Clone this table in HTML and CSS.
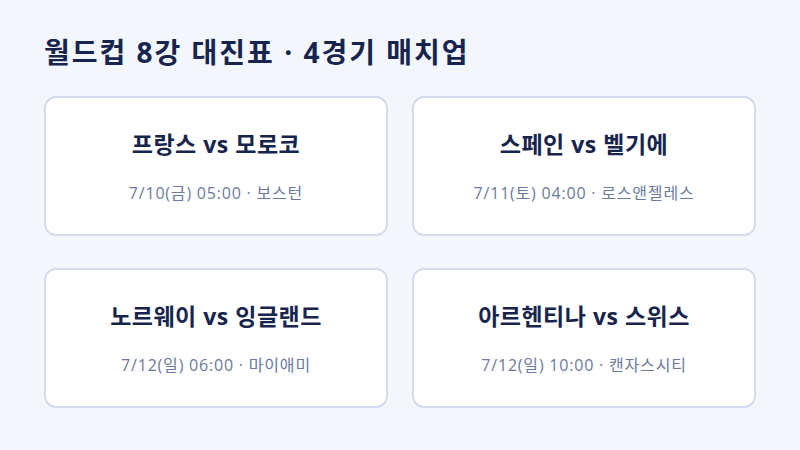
FILE: index.html
```html
<!DOCTYPE html>
<html lang="ko">
<head>
  <meta charset="UTF-8" />
  <meta name="viewport" content="width=device-width, initial-scale=1.0"/>
  <title>월드컵 8강 대진표</title>
  <link rel="stylesheet" href="styles.css">
</head>
<body>

  <div class="bracket">
    <h1>월드컵 8강 대진표 · 4경기 매치업</h1>

    <div class="matches">
      <div class="match">
        <div class="teams">프랑스 vs 모로코</div>
        <div class="meta">7/10(금) 05:00 · 보스턴</div>
      </div>
      <div class="match">
        <div class="teams">스페인 vs 벨기에</div>
        <div class="meta">7/11(토) 04:00 · 로스앤젤레스</div>
      </div>
      <div class="match">
        <div class="teams">노르웨이 vs 잉글랜드</div>
        <div class="meta">7/12(일) 06:00 · 마이애미</div>
      </div>
      <div class="match">
        <div class="teams">아르헨티나 vs 스위스</div>
        <div class="meta">7/12(일) 10:00 · 캔자스시티</div>
      </div>
    </div>
  </div>

</body>
</html>
```

FILE: styles.css
```css
* { box-sizing: border-box; }

body {
  font-family: 'Open Sans', 'Noto Sans CJK KR', sans-serif;
  background: #f3f6fd;
  margin: 0;
  padding: 0;
}

.bracket {
  padding: 32px 44px;
}

.bracket h1 {
  margin: 0 0 24px;
  font-size: 28px;
  line-height: 40px;
  font-weight: 700;
  letter-spacing: 2px;
  color: #17244d;
}

.matches {
  display: grid;
  grid-template-columns: 1fr 1fr;
  column-gap: 24px;
  row-gap: 32px;
}

.match {
  background: #fff;
  border: 2px solid #d3dbee;
  border-radius: 12px;
  height: 140px;
  display: flex;
  flex-direction: column;
  justify-content: center;
  align-items: center;
  gap: 24px;
  padding-top: 2px;
}

.teams {
  font-size: 23px;
  line-height: 28px;
  font-weight: 700;
  letter-spacing: 0.5px;
  color: #17244d;
}

.meta {
  font-size: 16px;
  line-height: 22px;
  letter-spacing: 0.8px;
  color: #6b7a9c;
}
```
